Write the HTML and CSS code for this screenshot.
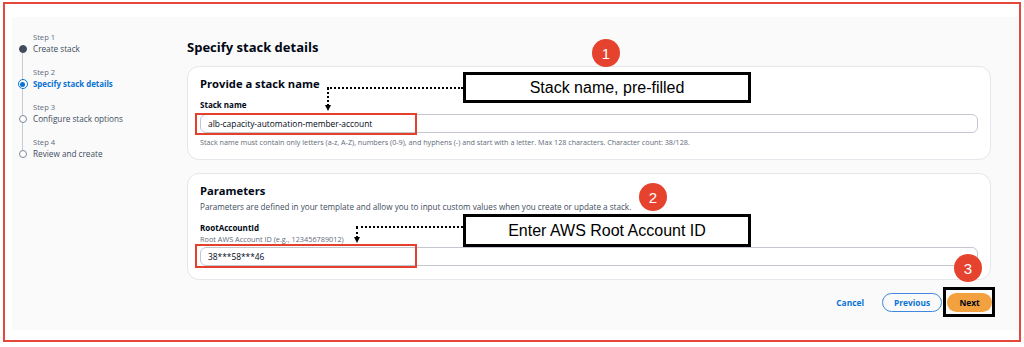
FILE: index.html
```html
<html>
    <head>
        <title>Specify stack details</title>
        <link rel="stylesheet" href="styles.css">
    </head>
    <body>
        <div class="page">
            <div class="frame">
                <div class="panel">
                    <nav class="steps">
                        <div class="step done">
                            <div class="track"><span class="seg top"></span><span class="dot"></span><span class="seg"></span></div>
                            <div class="step-text"><span class="step-num">Step 1</span><span class="step-name">Create stack</span></div>
                        </div>
                        <div class="step active">
                            <div class="track"><span class="seg top"></span><span class="dot"></span><span class="seg"></span></div>
                            <div class="step-text"><span class="step-num">Step 2</span><span class="step-name">Specify stack details</span></div>
                        </div>
                        <div class="step">
                            <div class="track"><span class="seg top"></span><span class="dot"></span><span class="seg"></span></div>
                            <div class="step-text"><span class="step-num">Step 3</span><span class="step-name">Configure stack options</span></div>
                        </div>
                        <div class="step last">
                            <div class="track"><span class="seg top"></span><span class="dot"></span><span class="seg"></span></div>
                            <div class="step-text"><span class="step-num">Step 4</span><span class="step-name">Review and create</span></div>
                        </div>
                    </nav>
                    <div class="content">
                        <h1>Specify stack details</h1>
                        <div class="card">
                            <h2>Provide a stack name</h2>
                            <div class="field-label">Stack name</div>
                            <div class="input">alb-capacity-automation-member-account</div>
                            <div class="hint">Stack name must contain only letters (a-z, A-Z), numbers (0-9), and hyphens (-) and start with a letter. Max 128 characters. Character count: 38/128.</div>
                        </div>
                        <div class="card params">
                            <h2>Parameters</h2>
                            <div class="desc">Parameters are defined in your template and allow you to input custom values when you create or update a stack.</div>
                            <div class="field-label spaced">RootAccountId</div>
                            <div class="sublabel">Root AWS Account ID (e.g., 123456789012)</div>
                            <div class="input">38***58***46</div>
                        </div>
                        <div class="actions">
                            <span class="btn-link">Cancel</span>
                            <span class="btn-outline">Previous</span>
                            <span class="btn-primary">Next</span>
                        </div>
                    </div>
                </div>
            </div>

            <!-- annotation overlay -->
            <div class="mark mark-1"></div>
            <div class="mark mark-2"></div>
            <div class="dots-h dots-h1"></div>
            <div class="dots-v dots-v1"></div>
            <div class="arrow arrow-1"></div>
            <div class="dots-h dots-h2"></div>
            <div class="dots-v dots-v2"></div>
            <div class="arrow arrow-2"></div>
            <div class="callout callout-1">Stack name, pre-filled</div>
            <div class="callout callout-2">Enter AWS Root Account ID</div>
            <div class="badge badge-1">1</div>
            <div class="badge badge-2">2</div>
            <div class="badge badge-3">3</div>
            <div class="next-box"></div>
        </div>
    </body>
</html>
```

FILE: styles.css
```css
body{
    margin: 0;
    background: #ffffff;
    font-family: "Open Sans", "Noto Sans", sans-serif;
    color: #000716;
}
.page{
    position: relative;
    width: 1024px;
    height: 347px;
    overflow: hidden;
}
.frame{
    margin: 2px 0 0 3px;
    width: 1018px;
    height: 340px;
    box-sizing: border-box;
    border: 2px solid #e5483a;
    padding: 13px 1px 10px 7px;
}
.panel{
    background: #fafafa;
    height: 313px;
    display: flex;
}

/* steps */
.steps{
    width: 175px;
    padding-top: 14px;
    display: flex;
    flex-direction: column;
}
.step{
    display: flex;
    height: 35px;
}
.track{
    width: 21px;
    display: flex;
    flex-direction: column;
    align-items: center;
}
.seg{
    flex: 1;
    width: 1px;
    background: #c6ccd4;
}
.seg.top{
    flex: 0 0 14px;
}
.step.done .seg.top, .step.last .seg:last-child{
    background: transparent;
}
.dot{
    width: 8px;
    height: 8px;
    box-sizing: border-box;
    border-radius: 50%;
    border: 1px solid #7d8998;
    background: #ffffff;
}
.step.done .dot{
    background: #414d5c;
    border-color: #414d5c;
}
.step.active .seg.top{
    flex: 0 0 13px;
}
.step.active .dot{
    width: 10px;
    height: 10px;
    border: 1.5px solid #0972d3;
    display: flex;
    align-items: center;
    justify-content: center;
}
.step.active .dot::after{
    content: "";
    width: 5px;
    height: 5px;
    border-radius: 50%;
    background: #0972d3;
}
.step-text{
    display: flex;
    flex-direction: column;
}
.step-num{
    font-size: 7.6px;
    line-height: 12px;
    color: #5f6b7a;
}
.step-name{
    font-size: 8.2px;
    line-height: 12px;
    color: #414d5c;
}
.step.active .step-name{
    color: #0972d3;
    font-weight: 700;
    font-size: 7.9px;
}

/* main */
.content{
    flex: 1;
    padding: 21px 27px 0 0;
}
h1{
    margin: 0 0 10px 0;
    font-size: 13px;
    line-height: 18px;
    font-weight: 700;
}
.card{
    background: #ffffff;
    border: 1px solid #e3e6ea;
    border-radius: 12px;
    padding: 9px 12px 12px 12px;
    margin-bottom: 13px;
}
.card.params{
    padding-bottom: 13px;
}
h2{
    margin: 0;
    font-size: 11.2px;
    line-height: 16px;
    font-weight: 700;
}
.field-label{
    margin-top: 7px;
    font-size: 8px;
    line-height: 12px;
    font-weight: 700;
}
.field-label.spaced{
    margin-top: 9px;
}
.desc{
    margin-top: 2px;
    font-size: 8.15px;
    line-height: 12px;
    color: #414d5c;
}
.sublabel{
    font-size: 7.3px;
    line-height: 10px;
    color: #5f6b7a;
}
.input{
    margin-top: 3px;
    height: 19px;
    box-sizing: border-box;
    border: 1px solid #c3c7cd;
    border-radius: 6px;
    padding-left: 7px;
    font-size: 8.4px;
    line-height: 17px;
}
.hint{
    margin-top: 4px;
    font-size: 7.2px;
    line-height: 10px;
    color: #5f6b7a;
}
.actions{
    display: flex;
    justify-content: flex-end;
    align-items: center;
    margin-right: -1px;
}
.btn-link{
    font-size: 8.4px;
    font-weight: 700;
    color: #0972d3;
    margin-right: 18px;
}
.btn-outline, .btn-primary{
    height: 19px;
    box-sizing: border-box;
    border-radius: 10px;
    font-size: 8.4px;
    font-weight: 700;
    display: flex;
    align-items: center;
    justify-content: center;
}
.btn-outline{
    width: 60px;
    border: 1.5px solid #3f86de;
    color: #0972d3;
    margin-right: 5px;
}
.btn-primary{
    width: 45px;
    background: #f3a13e;
    color: #000716;
}

/* annotations */
.mark, .dots-h, .dots-v, .arrow, .callout, .badge, .next-box{
    position: absolute;
    box-sizing: border-box;
}
.mark{
    border: 2px solid #e5402b;
}
.mark-1{
    left: 195px;
    top: 113px;
    width: 222px;
    height: 22px;
}
.mark-2{
    left: 195px;
    top: 244px;
    width: 222px;
    height: 24px;
}
.dots-h{
    border-top: 2px dotted #000000;
    height: 0;
}
.dots-v{
    border-left: 2px dotted #000000;
    width: 0;
}
.dots-h1{
    left: 327px;
    top: 87px;
    width: 136px;
}
.dots-v1{
    left: 327px;
    top: 88px;
    height: 18px;
}
.dots-h2{
    left: 356px;
    top: 226px;
    width: 107px;
}
.dots-v2{
    left: 356px;
    top: 227px;
    height: 11px;
}
.arrow{
    width: 0;
    height: 0;
    border-left: 3.5px solid transparent;
    border-right: 3.5px solid transparent;
    border-top: 6px solid #000000;
}
.arrow-1{
    left: 324.5px;
    top: 105px;
}
.arrow-2{
    left: 353.5px;
    top: 237px;
}
.callout{
    left: 463px;
    width: 288px;
    background: #ffffff;
    border: 3px solid #000000;
    font-family: "Liberation Sans", Arial, sans-serif;
    font-size: 16px;
    color: #000000;
    display: flex;
    align-items: center;
    justify-content: center;
}
.callout-1{
    top: 72px;
    height: 31px;
}
.callout-2{
    top: 214px;
    height: 33px;
}
.badge{
    width: 28px;
    height: 28px;
    border-radius: 50%;
    background: #e5432e;
    color: #ffffff;
    font-family: "Liberation Sans", Arial, sans-serif;
    font-size: 15px;
    display: flex;
    align-items: center;
    justify-content: center;
}
.badge-1{
    left: 592px;
    top: 39px;
}
.badge-2{
    left: 639px;
    top: 183px;
}
.badge-3{
    left: 954px;
    top: 254px;
}
.next-box{
    left: 943px;
    top: 287px;
    width: 52px;
    height: 30px;
    border: 3px solid #000000;
}
```
